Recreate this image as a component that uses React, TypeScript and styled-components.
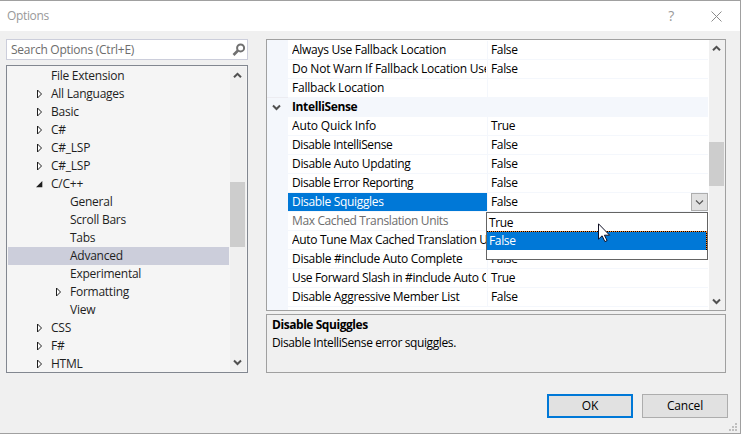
import React from "react";
import styled, { createGlobalStyle, css } from "styled-components";

const Global = createGlobalStyle`
  * { box-sizing: border-box; }
  body { margin: 0; overflow: hidden; }
`;

const Window = styled.div`
  position: relative;
  width: 741px;
  height: 434px;
  display: flex;
  flex-direction: column;
  background: #f0f0f0;
  border: solid #a0a0a0;
  border-width: 1px 1px 1px 0;
  font: 12px/18px "Open Sans", "Noto Sans", sans-serif;
  letter-spacing: -0.25px;
  color: #000;
  white-space: pre;
`;

const TitleBar = styled.header`
  flex: none;
  display: flex;
  align-items: center;
  height: 30px;
  padding: 0 18px 0 7px;
  background: #fff;
  color: #999;
`;

const Caption = styled.span`
  flex: 1;
  letter-spacing: -0.35px;
`;

const HelpMark = styled.span`
  font-size: 14px;
  margin-right: 37px;
`;

const Body = styled.main`
  display: grid;
  grid-template-columns: 242px 460px;
  column-gap: 18px;
  padding: 8px 0 0 6px;
`;

const Column = styled.section`
  display: flex;
  flex-direction: column;
`;

const SearchBox = styled.div`
  display: flex;
  align-items: center;
  justify-content: space-between;
  height: 21px;
  margin-bottom: 5px;
  padding: 0 1px 0 4px;
  background: #fff;
  border: 1px solid #cccedb;
  color: #6d6d6d;
`;

const TreePanel = styled.div`
  display: flex;
  height: 308px;
  padding: 1px;
  background: #f5f5f5;
  border: 1px solid #828790;
  color: #1e1e1e;
`;

const TreeList = styled.div`
  width: 221px;
  margin-right: 1px;
  overflow: hidden;
`;

const TreeRow = styled.div<{ $level: number; $selected?: boolean }>`
  display: flex;
  align-items: center;
  height: 18px;
  padding-left: ${(p) => 28 + p.$level * 19}px;
  background: ${(p) => (p.$selected ? "#cccedb" : "transparent")};
`;

const Expander = styled.span`
  display: flex;
  width: 15px;
`;

const ScrollTrack = styled.div`
  width: 16px;
  display: flex;
  flex-direction: column;
  background: #f0f0f0;
`;

const ScrollButton = styled.span`
  display: flex;
  justify-content: center;
  align-items: center;
  width: 15px;
  height: 17px;
`;

const Thumb = styled.div<{ $before: number; $size: number }>`
  width: 15px;
  height: ${(p) => p.$size}px;
  margin-top: ${(p) => p.$before}px;
  margin-bottom: auto;
  background: #cdcdcd;
`;

const GridPanel = styled.div`
  position: relative;
  display: flex;
  height: 272px;
  background: #fff;
  border: 1px solid #a0a0a0;
`;

const GridRows = styled.div`
  width: 441px;
  margin-right: 1px;
  padding-top: 1px;
  background: linear-gradient(90deg, #f4f7fc 21px, #fff 21px);
`;

const PropertyRow = styled.div`
  display: grid;
  grid-template-columns: 199px 1px 220px;
  height: 19px;
  margin-left: 21px;
`;

const lined = css`
  border-bottom: 1px solid #f4f7fc;
`;

const NameCell = styled.div<{ $state?: "selected" | "disabled" }>`
  ${lined}
  overflow: hidden;
  padding-left: 4px;
  color: ${(p) =>
    p.$state === "selected" ? "#fff" : p.$state === "disabled" ? "#6d6d6d" : "#000"};
  background: ${(p) => (p.$state === "selected" ? "#0078d7" : "transparent")};
  background-clip: padding-box;
`;

const NameText = styled.div<{ $tracking: number }>`
  width: 194px;
  overflow: hidden;
  letter-spacing: ${(p) => p.$tracking}px;
`;

const Divider = styled.div`
  background: #f4f7fc;
`;

const ValueCell = styled.div`
  ${lined}
  display: flex;
  justify-content: space-between;
  padding-left: 3px;
  letter-spacing: -0.35px;
`;

const CategoryRow = styled.div`
  display: flex;
  align-items: center;
  height: 19px;
  padding: 0 0 1px 5px;
  background: #f4f7fc;
  font-weight: 700;
  letter-spacing: -0.38px;
  box-shadow: 0 -1px #ececf1;
`;

const CategoryMark = styled.span`
  display: flex;
  width: 20px;
`;

const ComboButton = styled.div`
  display: flex;
  align-items: center;
  justify-content: center;
  width: 17px;
  height: 18px;
  background: #e1e1e1;
  border: 1px solid #adadad;
`;

const DropDown = styled.div`
  position: absolute;
  left: 219px;
  top: 172px;
  width: 222px;
  height: 48px;
  background: #fff;
  border: 1px solid #646464;
`;

const Option = styled.div<{ $selected?: boolean }>`
  height: ${(p) => (p.$selected ? 19 : 18)}px;
  padding: 1px 0 0 2px;
  line-height: 17px;
  letter-spacing: -0.35px;
  ${(p) =>
    p.$selected &&
    css`
      color: #fff;
      background:
        repeating-linear-gradient(90deg, #000 0 1px, #ff8728 1px 2px) top / 100% 1px no-repeat,
        repeating-linear-gradient(180deg, #000 0 1px, #ff8728 1px 2px) right / 1px 100% no-repeat,
        #0078d7;
    `}
`;

const Pointer = styled.svg`
  position: absolute;
  left: 331px;
  top: 183px;
`;

const Description = styled.div`
  height: 59px;
  margin-top: 3px;
  padding: 1px 5px;
  border: 1px solid #a0a0a0;
  letter-spacing: -0.39px;
`;

const DescriptionTitle = styled.div`
  font-weight: 700;
  letter-spacing: -0.44px;
`;

const Footer = styled.footer`
  display: flex;
  justify-content: flex-end;
  gap: 9px;
  padding: 21px 12px 0 0;
`;

const Button = styled.button<{ $primary?: boolean }>`
  width: 86px;
  height: 24px;
  padding: 0;
  font: inherit;
  letter-spacing: -0.15px;
  line-height: 18px;
  color: #000;
  background: #e1e1e1;
  border: ${(p) => (p.$primary ? "2px solid #0078d7" : "1px solid #adadad")};
`;

const Grip = styled.svg`
  position: absolute;
  right: 3px;
  bottom: 2px;
`;

const SearchIcon = () => (
  <svg width="14" height="14" viewBox="0 0 14 14" fill="none" stroke="#717171">
    <circle cx="8.6" cy="4.9" r="3.5" strokeWidth="2" />
    <path d="M6 7.5 1.5 12" strokeWidth="2.6" />
  </svg>
);

const Collapsed = () => (
  <svg width="7" height="10" viewBox="0 0 7 10" fill="#fff" stroke="#1e1e1e">
    <path d="M1.5 1v8l4-4z" />
  </svg>
);

const Expanded = () => (
  <svg width="7" height="7" viewBox="0 0 7 7" fill="#1e1e1e">
    <path d="M6.3 0v6.3H0z" />
  </svg>
);

const Chevron = ({ up, thin }: { up?: boolean; thin?: boolean }) => (
  <svg width="9" height="7" viewBox="0 0 9 7" fill="none" stroke={thin ? "#555" : "#505050"}>
    <path
      d={up ? "M1 5.3 4.5 1.8 8 5.3" : "M1 1.5 4.5 5 8 1.5"}
      strokeWidth={thin ? 1.2 : 2}
    />
  </svg>
);

const CloseIcon = () => (
  <svg width="11" height="11" viewBox="0 0 11 11" stroke="#8c8c8c">
    <path d="M.5.5l10 10M10.5.5l-10 10" />
  </svg>
);

type Node = [label: string, level: number, mark?: "closed" | "open", selected?: boolean];

const nodes: Node[] = [
  ["File Extension", 0],
  ["All Languages", 0, "closed"],
  ["Basic", 0, "closed"],
  ["C#", 0, "closed"],
  ["C#_LSP", 0, "closed"],
  ["C#_LSP", 0, "closed"],
  ["C/C++", 0, "open"],
  ["General", 1],
  ["Scroll Bars", 1],
  ["Tabs", 1],
  ["Advanced", 1, undefined, true],
  ["Experimental", 1],
  ["Formatting", 1, "closed"],
  ["View", 1],
  ["CSS", 0, "closed"],
  ["F#", 0, "closed"],
  ["HTML", 0, "closed"],
];

type Prop = [name: string, value: string, tracking: number, state?: "selected" | "disabled"];

const fallbackProps: Prop[] = [
  ["Always Use Fallback Location", "False", -0.27],
  ["Do Not Warn If Fallback Location Used", "False", -0.23],
  ["Fallback Location", "", -0.22],
];

const intelliSenseProps: Prop[] = [
  ["Auto Quick Info", "True", -0.15],
  ["Disable IntelliSense", "False", -0.4],
  ["Disable Auto Updating", "False", -0.32],
  ["Disable Error Reporting", "False", -0.42],
  ["Disable Squiggles", "False", -0.33, "selected"],
  ["Max Cached Translation Units", "", -0.37, "disabled"],
  ["Auto Tune Max Cached Translation Units", "", -0.33],
  ["Disable #include Auto Complete", "False", -0.3],
  ["Use Forward Slash in #include Auto Complete", "True", -0.33],
  ["Disable Aggressive Member List", "False", -0.32],
];

const Property = ({ item: [name, value, tracking, state] }: { item: Prop }) => (
  <PropertyRow>
    <NameCell $state={state}>
      <NameText $tracking={tracking}>{name}</NameText>
    </NameCell>
    <Divider />
    <ValueCell>
      {value}
      {state === "selected" && (
        <ComboButton>
          <Chevron thin />
        </ComboButton>
      )}
    </ValueCell>
  </PropertyRow>
);

const ScrollBar = ({ before, size }: { before: number; size: number }) => (
  <ScrollTrack>
    <ScrollButton>
      <Chevron up />
    </ScrollButton>
    <Thumb $before={before} $size={size} />
    <ScrollButton>
      <Chevron />
    </ScrollButton>
  </ScrollTrack>
);

export default function App() {
  return (
    <>
      <Global />
      <Window>
        <TitleBar>
          <Caption>Options</Caption>
          <HelpMark>?</HelpMark>
          <CloseIcon />
        </TitleBar>
        <Body>
          <Column>
            <SearchBox>
              Search Options (Ctrl+E)
              <SearchIcon />
            </SearchBox>
            <TreePanel>
              <TreeList>
                {nodes.map(([label, level, mark, selected], i) => (
                  <TreeRow key={i} $level={level} $selected={selected}>
                    <Expander>
                      {mark === "closed" && <Collapsed />}
                      {mark === "open" && <Expanded />}
                    </Expander>
                    {label}
                  </TreeRow>
                ))}
              </TreeList>
              <ScrollBar before={98} size={65} />
            </TreePanel>
          </Column>
          <Column>
            <GridPanel>
              <GridRows>
                {fallbackProps.map((p) => (
                  <Property key={p[0]} item={p} />
                ))}
                <CategoryRow>
                  <CategoryMark>
                    <Chevron />
                  </CategoryMark>
                  IntelliSense
                </CategoryRow>
                {intelliSenseProps.map((p) => (
                  <Property key={p[0]} item={p} />
                ))}
              </GridRows>
              <ScrollBar before={85} size={44} />
              <DropDown>
                <Option>True</Option>
                <Option $selected>False</Option>
              </DropDown>
              <Pointer width="13" height="20" viewBox="0 0 13 20">
                <path
                  d="M.5.8v15.4l3.6-3.4 2.8 5.8 2.2-1-2.7-5.4h5.2z"
                  fill="#fff"
                  stroke="#101025"
                />
              </Pointer>
            </GridPanel>
            <Description>
              <DescriptionTitle>Disable Squiggles</DescriptionTitle>
              <div>Disable IntelliSense error squiggles.</div>
            </Description>
          </Column>
        </Body>
        <Footer>
          <Button $primary>OK</Button>
          <Button>Cancel</Button>
        </Footer>
        <Grip width="8" height="8" fill="#bfbfbf">
          <path d="M6 0h2v2h-2zM3 3h2v2h-2zM6 3h2v2h-2zM0 6h2v2h-2zM3 6h2v2h-2zM6 6h2v2h-2z" />
        </Grip>
      </Window>
    </>
  );
}
